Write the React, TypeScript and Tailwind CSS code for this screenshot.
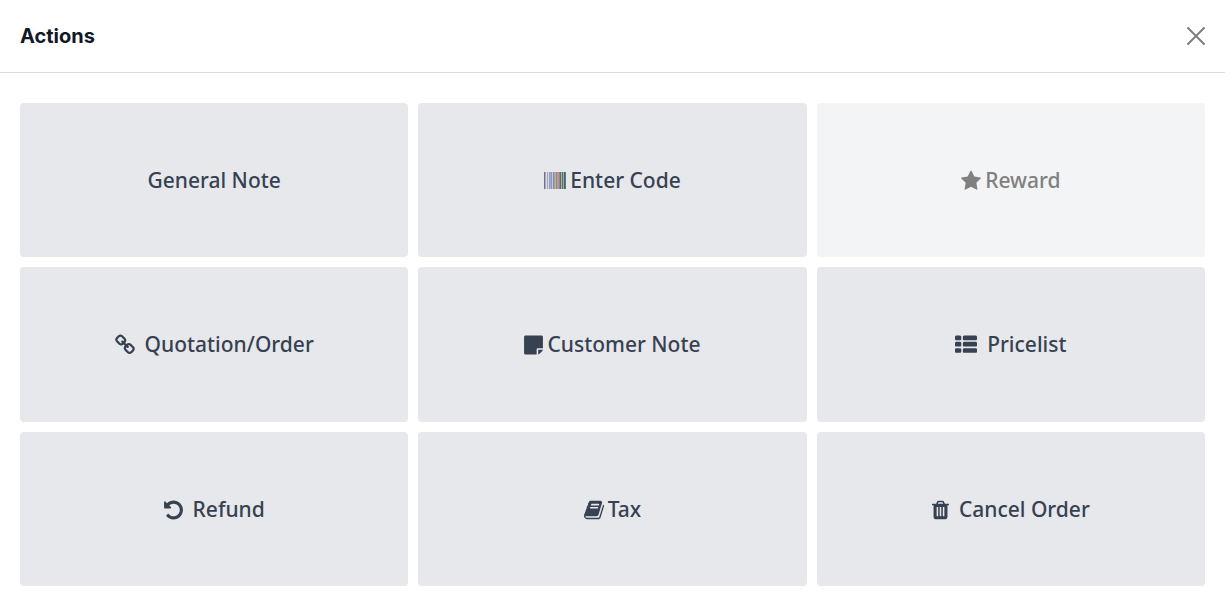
import React from 'react';

interface IconProps {
    className: string;
    viewBox: string;
    d: string;
}

const Icon: React.FC<IconProps> = ({ className, viewBox, d }) => (
    <svg className={`mt-0.5 shrink-0 ${className}`} viewBox={viewBox} fill="currentColor" aria-hidden="true">
        <path d={d} />
    </svg>
);

const stripes = [
    '#7b6a92', '#a9a9bd', '#dcdce4', '#b3a5ad', '#d8dbe6', '#8f9cc4', '#b4a7ae', '#7f9bd0',
    '#c3cbdc', '#6c93c9', '#a7a09d', '#dba96c', '#6f8fb8', '#c09a8b', '#d68d76', '#7a89bb',
    '#4e7163', '#c4a98c', '#596b86', '#8fb19e', '#64508a', '#3f8a6a',
];

const BarcodeIcon = () => (
    <svg className="h-[17px] w-[22px] shrink-0" viewBox="0 0 22 17" aria-hidden="true">
        {stripes.map((color, i) => <rect key={i} x={i} y="0" width="1" height="17" fill={color} />)}
    </svg>
);

const StarIcon = () => (
    <Icon className="h-[22px] w-5" viewBox="64 0 1664 1792" d="M1728 647q0 22-26 48l-363 354 86 500q1 7 1 20 0 21-10.5 35.5t-30.5 14.5q-19 0-40-12l-449-236-449 236q-22 12-40 12-21 0-31.5-14.5t-10.5-35.5q0-6 2-20l86-500-364-354q-25-27-25-48 0-37 56-46l502-73 225-455q19-41 49-41t49 41l225 455 502 73q56 9 56 46z" />
);

const LinkIcon = () => (
    <Icon className="h-[22px] w-5" viewBox="64 0 1664 1792" d="M1520 1216q0-40-28-68l-208-208q-28-28-68-28-42 0-72 32 3 3 19 18.5t21.5 21.5 15 19 13 25.5 3.5 27.5q0 40-28 68t-68 28q-15 0-27.5-3.5t-25.5-13-19-15-21.5-21.5-18.5-19q-33 31-33 73 0 40 28 68l206 207q27 27 68 27 40 0 68-26l147-146q28-28 28-67zm-703-705q0-40-28-68l-206-207q-28-28-68-28-39 0-68 27l-147 146q-28 28-28 67 0 40 28 68l208 208q27 27 68 27 42 0 72-31-3-3-19-18.5t-21.5-21.5-15-19-13-25.5-3.5-27.5q0-40 28-68t68-28q15 0 27.5 3.5t25.5 13 19 15 21.5 21.5 18.5 19q33-31 33-73zm895 705q0 120-85 203l-147 146q-83 83-203 83-121 0-204-85l-206-207q-83-83-83-203 0-123 88-209l-88-88q-86 88-208 88-120 0-204-84l-208-208q-84-84-84-204t85-203l147-146q83-83 203-83 121 0 204 85l206 207q83 83 83 203 0 123-88 209l88 88q86-88 208-88 120 0 204 84l208 208q84 84 84 204z" />
);

const NoteIcon = () => (
    <Icon className="h-[22px] w-[19px]" viewBox="128 0 1536 1792" d="M1152 1248v416h-928q-40 0-68-28t-28-68v-1344q0-40 28-68t68-28h1344q40 0 68 28t28 68v928h-416q-40 0-68 28t-28 68zm128 32h381q-15 82-65 132l-184 184q-50 50-132 65v-381z" />
);

const ListIcon = () => (
    <Icon className="size-[22px]" viewBox="0 0 1792 1792" d="M512 1248v192q0 40-28 68t-68 28h-320q-40 0-68-28t-28-68v-192q0-40 28-68t68-28h320q40 0 68 28t28 68zm0-512v192q0 40-28 68t-68 28h-320q-40 0-68-28t-28-68v-192q0-40 28-68t68-28h320q40 0 68 28t28 68zm1280 512v192q0 40-28 68t-68 28h-960q-40 0-68-28t-28-68v-192q0-40 28-68t68-28h960q40 0 68 28t28 68zm-1280-1024v192q0 40-28 68t-68 28h-320q-40 0-68-28t-28-68v-192q0-40 28-68t68-28h320q40 0 68 28t28 68zm1280 512v192q0 40-28 68t-68 28h-960q-40 0-68-28t-28-68v-192q0-40 28-68t68-28h960q40 0 68 28t28 68zm0-512v192q0 40-28 68t-68 28h-960q-40 0-68-28t-28-68v-192q0-40 28-68t68-28h960q40 0 68 28t28 68z" />
);

const UndoIcon = () => (
    <Icon className="h-[22px] w-[19px]" viewBox="128 0 1536 1792" d="M1664 896q0 156-61 298t-164 245-245 164-298 61q-172 0-327-72.5t-264-204.5q-7-10-6.5-22.5t8.5-20.5l137-138q10-9 25-9 16 2 23 12 73 95 179 147t225 52q104 0 198.5-40.5t163.5-109.5 109.5-163.5 40.5-198.5-40.5-198.5-109.5-163.5-163.5-109.5-198.5-40.5q-98 0-188 35.5t-160 101.5l137 138q31 30 14 69-17 40-59 40h-448q-26 0-45-19t-19-45v-448q0-42 40-59 39-17 69 14l130 129q107-101 244.5-156.5t284.5-55.5q156 0 298 61t245 164 164 245 61 298z" />
);

const BookIcon = () => (
    <Icon className="h-[22px] w-5" viewBox="64 0 1664 1792" d="M1703 478q40 57 18 129l-275 906q-19 64-76.5 107.5t-122.5 43.5h-923q-77 0-148.5-53.5t-99.5-131.5q-24-67-2-127 0-4 3-27t4-37q1-8-3-21.5t-3-19.5q2-11 8-21t16.5-23.5 16.5-23.5q23-38 45-91.5t30-91.5q3-10 .5-30t-.5-28q3-11 17-28t17-23q21-36 42-92t25-90q1-9-2.5-32t.5-28q4-13 22-30.5t22-22.5q19-26 42.5-84.5t27.5-96.5q1-8-3-25.5t-2-26.5q2-8 9-18t18-23 17-21q8-12 16.5-30.5t15-35 16-36 19.5-32 26.5-23.5 36-11.5 47.5 5.5l-1 3q38-9 51-9h761q74 0 114 56t18 130l-274 906q-36 119-71.5 153.5t-128.5 34.5h-869q-27 0-38 15-11 16-1 43 24 70 144 70h923q29 0 56-15.5t35-41.5l300-987q7-22 5-57 38 15 59 43zm-1064 2q-4 13 2 22.5t20 9.5h608q13 0 25.5-9.5t16.5-22.5l21-64q4-13-2-22.5t-20-9.5h-608q-13 0-25.5 9.5t-16.5 22.5zm-83 256q-4 13 2 22.5t20 9.5h608q13 0 25.5-9.5t16.5-22.5l21-64q4-13-2-22.5t-20-9.5h-608q-13 0-25.5 9.5t-16.5 22.5z" />
);

const TrashIcon = () => (
    <Icon className="h-[22px] w-[17px]" viewBox="192 0 1408 1792" d="M704 1376v-704q0-14-9-23t-23-9h-64q-14 0-23 9t-9 23v704q0 14 9 23t23 9h64q14 0 23-9t9-23zm256 0v-704q0-14-9-23t-23-9h-64q-14 0-23 9t-9 23v704q0 14 9 23t23 9h64q14 0 23-9t9-23zm256 0v-704q0-14-9-23t-23-9h-64q-14 0-23 9t-9 23v704q0 14 9 23t23 9h64q14 0 23-9t9-23zm-544-992h448l-48-117q-7-9-17-11h-317q-10 2-17 11zm928 32v64q0 14-9 23t-23 9h-96v948q0 83-47 143.5t-113 60.5h-832q-66 0-113-58.5t-47-141.5v-952h-96q-14 0-23-9t-9-23v-64q0-14 9-23t23-9h309l70-167q15-37 54-63t79-26h320q40 0 79 26t54 63l70 167h309q14 0 23 9t9 23z" />
);

interface Action {
    label: string;
    icon?: React.ReactNode;
    gap?: string;
    disabled?: boolean;
}

const actions: Action[] = [
    { label: 'General Note' },
    { label: 'Enter Code', icon: <BarcodeIcon />, gap: 'gap-1' },
    { label: 'Reward', icon: <StarIcon />, gap: 'gap-1', disabled: true },
    { label: 'Quotation/Order', icon: <LinkIcon />, gap: 'gap-2.5' },
    { label: 'Customer Note', icon: <NoteIcon />, gap: 'gap-1' },
    { label: 'Pricelist', icon: <ListIcon />, gap: 'gap-2.5' },
    { label: 'Refund', icon: <UndoIcon />, gap: 'gap-2.5' },
    { label: 'Tax', icon: <BookIcon />, gap: 'gap-1' },
    { label: 'Cancel Order', icon: <TrashIcon />, gap: 'gap-2.5' },
];

const ActionButton: React.FC<Action> = ({ label, icon, gap = '', disabled }) => (
    <button
        type="button"
        disabled={disabled}
        className={`flex items-center justify-center rounded bg-[#e7e8ec] px-3 py-6 text-[#374151] disabled:bg-[#f3f4f6] disabled:text-[#808080] ${gap}`}
    >
        {icon}
        <span>{label}</span>
    </button>
);

const App: React.FC = () => {
    return (
        <div className="flex min-h-screen flex-col bg-white">
            <header className="flex items-center justify-between border-b border-[#d8dadd] px-5 py-5">
                <h1 className="font-[Inter,sans-serif] text-xl leading-8 font-bold text-[#111827]">Actions</h1>
                <button type="button" aria-label="Close" className="text-[#7f7f7f]">
                    <svg className="size-[18px]" viewBox="0 0 18 18" fill="none" stroke="currentColor" strokeWidth="2" strokeLinecap="round" aria-hidden="true">
                        <path d="M1 1l16 16M17 1L1 17" />
                    </svg>
                </button>
            </header>
            <main className="grid flex-1 auto-rows-fr grid-cols-3 gap-2.5 px-5 pt-[30px] pb-5 font-['Noto_Sans',sans-serif] text-[21px] leading-8 font-medium">
                {actions.map(action => <ActionButton key={action.label} {...action} />)}
            </main>
        </div>
    );
};

export default App;
